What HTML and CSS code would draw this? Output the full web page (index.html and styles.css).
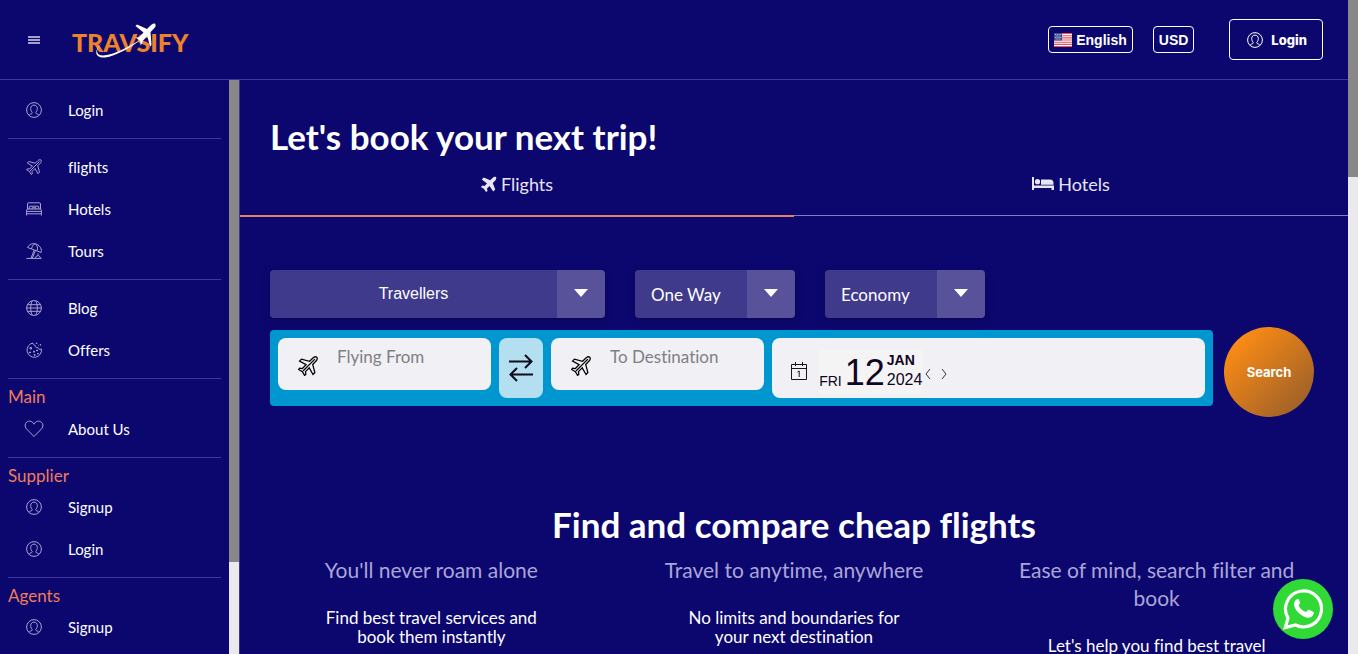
FILE: index.html
```html
<!DOCTYPE html>
<html lang="en">
<head>
<meta charset="utf-8">
<meta name="viewport" content="width=device-width, initial-scale=1">
<title>Travsify</title>
<link rel="stylesheet" href="styles.css">
</head>
<body>
<svg class="defs" width="0" height="0" aria-hidden="true">
  <symbol id="user" viewBox="0 0 16 16"><circle cx="8" cy="8" r="7.4"/><path d="M3.200 13.400c.2-1.100 1.400-1.400 2.500-1.800.6-.3.7-.9.3-1.500C4.900 8.800 4.700 7.700 4.700 6.500 4.700 4.500 6 3.100 8 3.100s3.300 1.400 3.300 3.400c0 1.200-.2 2.300-1.300 3.600-.4.6-.3 1.200.3 1.500 1.100.4 2.300.7 2.500 1.800"/></symbol>
  <symbol id="plane" viewBox="0 0 32 32"><path d="M30 2c-2-1.500-5 0-6.500 1.500L18.500 8.500 5.500 5 2.500 8 13 14l-6 6-4.500-.5L1 21.500l6 3.500 3.500 6 2-1.500L12 25l6-6 6 10.500 3-3-3.500-13 5-5C30 7 31.500 4 30 2zM8 24 27 5"/></symbol>
  <symbol id="bed" viewBox="0 0 16 16"><path d="M1.500 8V3q0-1.200 1.200-1.200h10.600q1.200 0 1.200 1.200v5M.6 14.500V9.300q0-1.300 1.300-1.300h12.200q1.300 0 1.300 1.300v5.200M.6 10.400h14.800M.6 12.800h14.800M3.200 8V6q0-.8.8-.8h8q.8 0 .8.800v2M6 8V6.800h4V8"/></symbol>
  <symbol id="beach" viewBox="0 0 16 16"><path d="M1.500 4.500C4-.5 11-.9 14.500 4.500c1 1.900 1 3.800.7 5L1.500 4.500zM5.500 5.800C6.300 2.300 8 1 9.500 1.100c2 1 2.500 4.500 1.500 6.600M8.200 7 5 15.300M6.300 15.300l3.100-7.800M.5 15.400h15M9.500 15.300c0-3.500 4.800-3.500 4.800 0M12 12.500v-2"/></symbol>
  <symbol id="globe" viewBox="0 0 16 16"><circle cx="8" cy="8" r="7.400"/><path d="M1.600 4.700h12.800M1.600 11.300h12.800M.6 8h14.800M6.200.8c-2 4-2 10.400 0 14.400M9.800.8c2 4 2 10.400 0 14.400"/></symbol>
  <symbol id="cookie" viewBox="0 0 16 16"><path d="M7 1A7.200 7.200 0 1 0 15.400 7c-2.200.7-3.400-.2-3.500-1.500-2 .3-2.900-.6-2.600-2.100C7.900 3.200 7 2.200 7 1z"/><path d="M4 5.500h1.500v1.500H4zM3.500 10h1v.8h-1zM7.500 9.200h1v1h-1zM10.500 8h1v.8h-1zM8.200 12.500h1v.8h-1zM11.500 11.500h1v.5h-1zM10.200 1h.8v.5h-.8zM14 2.600h.8v.5H14zM12 3.500h.6"/></symbol>
  <symbol id="heart" viewBox="0 0 20 18"><path d="M10 16.500 2.400 8.800C.5 6.500.8 3.600 2.600 2.200 5 .4 8.500 1 10 4.200 11.500 1 15 .4 17.400 2.200c1.800 1.400 2.100 4.300.2 6.600z"/></symbol>
</svg>
<div class="page">
  <div class="app">
    <header class="header">
      <button class="menu" aria-label="Menu"><span></span><span></span><span></span></button>
      <a class="logo" href="#" aria-label="Travsify">
        <span>TRAVSIFY</span>
        <svg class="logo-art" viewBox="0 0 120 40" aria-hidden="true">
          <path d="M30 21C22 29 24 35 35 33 49 30 60 22 70 17 58 26 44 34 33 35.500 22 36 22 28 30 21z"/>
          <path d="M83 1.500c-2-.5-4 1-5.500 3L75 7 65 2.500l-1.500 1.500 8 6.500-4.500 5-4-.3 5 3.200.8 5 2-4.500 4.500-5 2.700 10.500 1.500-1.500L78.500 10l3-3c1.500-1.500 3-3 1.500-5.500z"/>
        </svg>
      </a>
      <div class="actions">
        <button class="chip">
          <svg class="flag" viewBox="0 0 18 14" aria-hidden="true"><path fill="#fff" d="M0 0h18v14H0z"/><path stroke="#e8505f" stroke-width="1.100" d="M0 .5h18M0 2.700h18M0 4.900h18M0 7h18M0 9.200h18M0 11.400h18M0 13.500h18"/><path fill="#3b4a92" d="M0 0h8v7.500H0z"/><path stroke="#fff" stroke-width=".8" stroke-dasharray=".8 1" d="M1 1.500h6.500M1.800 3h5M1 4.500h6.500M1.800 6h5"/></svg>
          English</button>
        <button class="chip">USD</button>
        <button class="login"><svg class="icon" aria-hidden="true"><use href="#user"/></svg>Login</button>
      </div>
    </header>
    <div class="body">
      <aside class="sidebar">
        <nav class="nav">
          <a href="#"><svg class="icon"><use href="#user"/></svg>Login</a>
          <hr>
          <a href="#"><svg class="icon"><use href="#plane"/></svg>flights</a>
          <a href="#"><svg class="icon"><use href="#bed"/></svg>Hotels</a>
          <a href="#"><svg class="icon"><use href="#beach"/></svg>Tours</a>
          <hr>
          <a href="#"><svg class="icon"><use href="#globe"/></svg>Blog</a>
          <a href="#"><svg class="icon"><use href="#cookie"/></svg>Offers</a>
          <hr class="tight">
          <h2>Main</h2>
          <a href="#"><svg class="icon"><use href="#heart"/></svg>About Us</a>
          <hr class="tight">
          <h2>Supplier</h2>
          <a href="#"><svg class="icon"><use href="#user"/></svg>Signup</a>
          <a href="#"><svg class="icon"><use href="#user"/></svg>Login</a>
          <hr class="tight">
          <h2>Agents</h2>
          <a href="#"><svg class="icon"><use href="#user"/></svg>Signup</a>
        </nav>
        <div class="bar"><div class="thumb side-thumb"></div></div>
      </aside>
      <main class="main">
        <h1 class="title">Let's book your next trip!</h1>
        <div class="tabs" role="tablist">
          <button class="tab active" role="tab" aria-selected="true">
            <svg width="16" height="16" viewBox="0 0 32 32" aria-hidden="true"><path fill="currentColor" d="M30 2c-2-1.500-5 0-6.500 1.500L18.500 8.500 5.500 3 1.500 7 12 15l-5 5-5-1L0 22l6 4 4 6 3-2-1-5 5-5 7.500 11 4-4-5-13 5-5C30 7 31.500 4 30 2z"/></svg>
            Flights</button>
          <button class="tab" role="tab" aria-selected="false">
            <svg width="22" height="14" viewBox="0 0 22 14" aria-hidden="true"><path fill="currentColor" d="M0 0h2v8.500h20V13h-2.500v-2H2v2H0zM9 2.500h9q3.500 0 3.500 3.500v1.800H9z"/><circle fill="currentColor" cx="5.500" cy="4.700" r="2.600"/></svg>
            Hotels</button>
        </div>
        <form class="search">
          <div class="options">
            <button type="button" class="drop travellers">Travellers</button>
            <div class="drop"><select aria-label="Trip type"><option>One Way</option><option>Return</option></select></div>
            <div class="drop"><select aria-label="Cabin class"><option>Economy</option><option>Business</option></select></div>
          </div>
          <div class="row">
            <div class="fields">
              <label class="field"><svg class="icon"><use href="#plane"/></svg><input type="text" placeholder="Flying From" aria-label="Flying From"></label>
              <button type="button" class="swap" aria-label="Swap"><svg width="24" height="28" viewBox="0 0 24 28"><path fill="none" stroke="#0c0c1c" stroke-width="2" d="M0 7.500h22M16 1l6.500 6.500L16 14M24 20.500H2M8 14l-6.500 6.500L8 27"/></svg></button>
              <label class="field"><svg class="icon"><use href="#plane"/></svg><input type="text" placeholder="To Destination" aria-label="To Destination"></label>
              <div class="date">
                <svg width="16" height="18" viewBox="0 0 16 18" aria-hidden="true"><path fill="none" stroke="#15151f" d="M.5 2.500h15v15H.5zM.5 6.500h15M4.500 0v4M11.500 0v4M6.500 10l1.700-1v6"/></svg>
                <div class="cal"><span class="dow">FRI</span><span class="day">12</span><span class="my"><b>JAN</b><span>2024</span></span></div>
                <button type="button" class="step" aria-label="Previous day"><svg width="6" height="12" viewBox="0 0 6 12"><path d="M5 1 1 6l4 5"/></svg></button>
                <button type="button" class="step" aria-label="Next day"><svg width="6" height="12" viewBox="0 0 6 12"><path d="m1 1 4 5-4 5"/></svg></button>
              </div>
            </div>
            <button class="go">Search</button>
          </div>
        </form>
        <section class="info">
          <h2>Find and compare cheap flights</h2>
          <div class="cols">
            <article><h3>You'll never roam alone</h3><p>Find best travel services and book them instantly</p></article>
            <article><h3>Travel to anytime, anywhere</h3><p>No limits and boundaries for your next destination</p></article>
            <article><h3>Ease of mind, search filter and book</h3><p>Let's help you find best travel</p></article>
          </div>
        </section>
      </main>
    </div>
  </div>
  <div class="bar"><div class="thumb page-thumb"></div></div>
</div>
<a class="whatsapp" href="#" aria-label="WhatsApp"><svg width="40" height="42" viewBox="0 0 40 42"><path fill="none" stroke="#fff" stroke-width="3.200" d="M2.300 39.500 5 30A18 18 0 1 1 12.500 37z"/><path fill="#fff" d="M13.300 11.500c-5 4-1 10.500 3.700 14.600 5.500 4.700 12 5.500 13.800-.8.200-1.200 0-1.400-4.800-3.600-1.500-.4-1.800 1.400-3.100 2.400-3.900-1.300-6.200-4.100-7.400-6.800 1.800-2 1.900-2.300 1.300-3.600l-1.300-2.900z"/></svg></a>
</body>
</html>
```
FILE: styles.css
```css
* { box-sizing: border-box; }
body { margin: 0; background: #0c076f; color: #fff; font-family: Lato, "Open Sans", sans-serif; font-variant-ligatures: none; overflow: hidden; }
button, input, select { font: inherit; color: inherit; }
button { cursor: pointer; border: 0; padding: 0; background: none; }
a { color: inherit; text-decoration: none; }
h1, h2, h3, p { margin: 0; }
.defs { position: absolute; }
.page { display: flex; height: 100vh; }
.app { flex: 1; display: flex; flex-direction: column; min-width: 0; }
.bar { width: 10px; flex: none; background: #e9e9ee; }
.thumb { background: #888; }
.page-thumb { height: 27%; }
.side-thumb { height: 84%; }
.icon { width: 16px; height: 16px; flex: none; fill: none; stroke: currentColor; }

.header { height: 80px; flex: none; display: flex; align-items: center; border-bottom: 1px solid #423196; padding: 0 25px 0 28px; }
.menu { width: 12px; display: grid; gap: 1px; }
.menu span { height: 2px; background: #a5a0cb; }
.logo { position: relative; margin: 4px 0 0 32px; width: 120px; font-size: 25px; line-height: 40px; font-weight: 900; color: #ec832b; }
.logo-art { position: absolute; left: 0; top: 0; width: 120px; height: 40px; fill: #fff; }
.actions { margin-left: auto; display: flex; align-items: center; gap: 20px; }
.chip { height: 27px; padding: 0 5px; border: 1px solid #fff; border-radius: 4px; display: flex; align-items: center; gap: 4px; font: bold 14px "Liberation Sans", sans-serif; }
.flag { width: 18px; height: 14px; }
.login { height: 41px; margin-left: 15px; padding: 0 15px 0 17px; border: 1px solid #fff; border-radius: 4px; display: flex; align-items: center; gap: 8px; font: 800 13px Inter, sans-serif; }
.login .icon { stroke-width: 1; }

.body { flex: 1; display: flex; min-height: 0; }
.sidebar { width: 240px; flex: none; display: flex; border-right: 1px solid #423196; }
.nav { flex: 1; padding: 9px 8px 0; overflow: hidden; }
.nav a { display: flex; align-items: center; gap: 26px; height: 42px; padding-left: 18px; font-size: 15px; }
.nav .icon { color: #aaa3d2; stroke-width: 1; }
.nav .icon:has([href="#plane"]) { stroke-width: 2; }
.nav .icon:has([href="#heart"]) { width: 20px; height: 18px; margin: 0 -2px; stroke-width: 1; }
.nav hr { margin: 7px 0; border: 0; border-top: 1px solid #423196; }
.nav .tight { margin-bottom: 0; }
.nav h2 { font-size: 17px; line-height: 28px; height: 29px; padding-top: 4px; font-weight: 400; color: #f07c5a; }
.nav h2 ~ h2 { height: 28px; }

.main { flex: 1; min-width: 0; overflow: hidden; }
.title { padding: 36px 30px 0; font-size: 35px; line-height: 40px; font-weight: 700; }
.tabs { display: flex; align-items: flex-start; margin-top: 6px; }
.tab { flex: 1; height: 54px; padding-bottom: 10px; display: flex; align-items: center; justify-content: center; gap: 4px; font-size: 18px; color: #e7e5f3; border-bottom: 1px solid #857fb9; }
.tab.active { height: 55px; border-bottom: 2px solid #e58360; }
.search { padding: 53px 34px 0 30px; }
.options { display: flex; gap: 30px; margin-bottom: 12px; }
.drop { position: relative; width: 160px; height: 48px; border-radius: 4px; color: #fff; background: linear-gradient(to left, #58529a 48px, #403a8c 48px); box-shadow: 0 2px 8px rgba(0, 0, 0, .25); }
.drop::after { content: ""; position: absolute; right: 17px; top: 19px; border: 7px solid transparent; border-top: 8px solid #fff; border-bottom: 0; }
.travellers { width: 335px; padding-right: 48px; font: 16px "Liberation Sans", sans-serif; }
.drop select { width: 100%; height: 100%; appearance: none; border: 0; background: none; padding: 0 48px 0 16px; font-size: 17px; }
.drop option { color: #000; }
.row { display: flex; align-items: flex-start; gap: 11px; }
.fields { flex: 1; display: grid; grid-template-columns: 32fr 44px 32fr 65fr; gap: 8px; padding: 8px; background: #0096d0; border-radius: 4px; align-items: start; }
.field { display: flex; min-width: 0; height: 52px; padding: 0 8px 0 20px; border-radius: 8px; background: #f1f0f4; color: #000; }
.field .icon { width: 20px; height: 20px; margin-top: 18px; stroke-width: 2; }
.field input { flex: 1; min-width: 0; height: 36px; border: 0; padding: 0 0 0 19px; background: none; font-size: 17px; outline: 0; }
.field input::placeholder { color: #807f85; opacity: 1; }
.swap { height: 60px; border-radius: 8px; background: #b3dff0; display: grid; place-items: center; }
.date { height: 60px; display: flex; align-items: center; padding: 6px 19px 0; border-radius: 8px; background: #f1f0f4; color: #10051f; }
.cal { display: flex; align-items: flex-end; margin: 0 3px 0 12px; padding-bottom: 5px; background: #f4f4f5; font-family: "Liberation Sans", sans-serif; }
.dow { font-size: 14px; line-height: 16px; }
.day { margin: 0 2px 0 3px; font-size: 36px; line-height: 32px; }
.my { display: grid; font-size: 16px; line-height: 18px; }
.my b { font-size: 14px; line-height: 22px; }
.step { margin-right: 10px; padding-top: 6px; display: grid; }
.step path { fill: none; stroke: #333; }
.go { width: 90px; height: 90px; margin-top: -3px; flex: none; border-radius: 50%; background: linear-gradient(135deg, #fa8b15 15%, #9d6029 90%); font: bold 13px Inter, sans-serif; }
.info { padding: 85px 10px 0; text-align: center; }
.info h2 { font-size: 35px; line-height: 44px; font-weight: 700; }
.cols { display: grid; grid-template-columns: repeat(3, 1fr); margin-top: 10px; }
.info article { padding: 0 40px; }
.info h3 { font-size: 21px; line-height: 28px; font-weight: 400; color: #aaa5d7; }
.info p { padding: 0 26px; margin-top: 24px; font-size: 17px; line-height: 19px; }
.whatsapp { position: fixed; right: 25px; bottom: 15px; width: 60px; height: 60px; border-radius: 50%; background: #30d936; display: grid; place-items: center; }
```
